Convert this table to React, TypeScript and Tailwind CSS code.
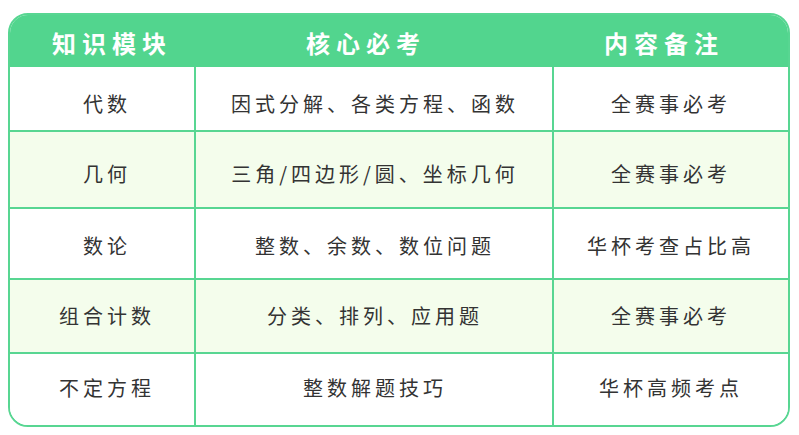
import React from "react";

const rows = [
  { a: "代数", b: "因式分解、各类方程、函数", c: "全赛事必考", h: "h-[65px]", p: "pt-[10px]", alt: false },
  { a: "几何", b: "三角/四边形/圆、坐标几何", c: "全赛事必考", h: "h-[77px]", p: "pt-[9px]", alt: true },
  { a: "数论", b: "整数、余数、数位问题", c: "华杯考查占比高", h: "h-[71px]", p: "pt-[5px]", alt: false },
  { a: "组合计数", b: "分类、排列、应用题", c: "全赛事必考", h: "h-[74px]", p: "pt-[0px]", alt: true },
  { a: "不定方程", b: "整数解题技巧", c: "华杯高频考点", h: "h-[71px]", p: "pb-[4px]", alt: false },
];

export default function App() {
  return (
    <div
      className="w-[799px] h-[435px] bg-white pl-[8px] pt-[13px]"
      style={{ fontFamily: '"Noto Sans CJK SC", "Noto Sans", sans-serif' }}
    >
      <div className="w-[782px] h-[414px] border-2 border-[#58d692] rounded-[20px] overflow-hidden flex flex-col">
        <div className="grid grid-cols-[186px_358px_1fr] h-[52px] bg-[#52d58e] text-white font-bold text-[24px] tracking-[6px]">
          <div className="flex items-center justify-center pt-[3px] pl-[18px]">知识模块</div>
          <div className="flex items-center justify-center pt-[3px] pr-[18px]">核心必考</div>
          <div className="flex items-center justify-center pt-[3px] pr-[14px]">内容备注</div>
        </div>
        {rows.map((r, i) => (
          <div
            key={i}
            className={`grid grid-cols-[186px_358px_1fr] ${r.h} ${i < rows.length - 1 ? "border-b-2 border-[#58d692]" : ""} ${r.alt ? "bg-[#f4fdec]" : "bg-white"} text-[20px] tracking-[4px] text-[#333333]`}
          >
            <div className={`flex items-center justify-center border-r-2 border-[#58d692] pl-[10px] ${r.p}`}>{r.a}</div>
            <div className={`flex items-center justify-center border-r-2 border-[#58d692] pl-[2px] ${r.p}`}>{r.b}</div>
            <div className={`flex items-center justify-center ${r.p}`}>{r.c}</div>
          </div>
        ))}
      </div>
    </div>
  );
}
